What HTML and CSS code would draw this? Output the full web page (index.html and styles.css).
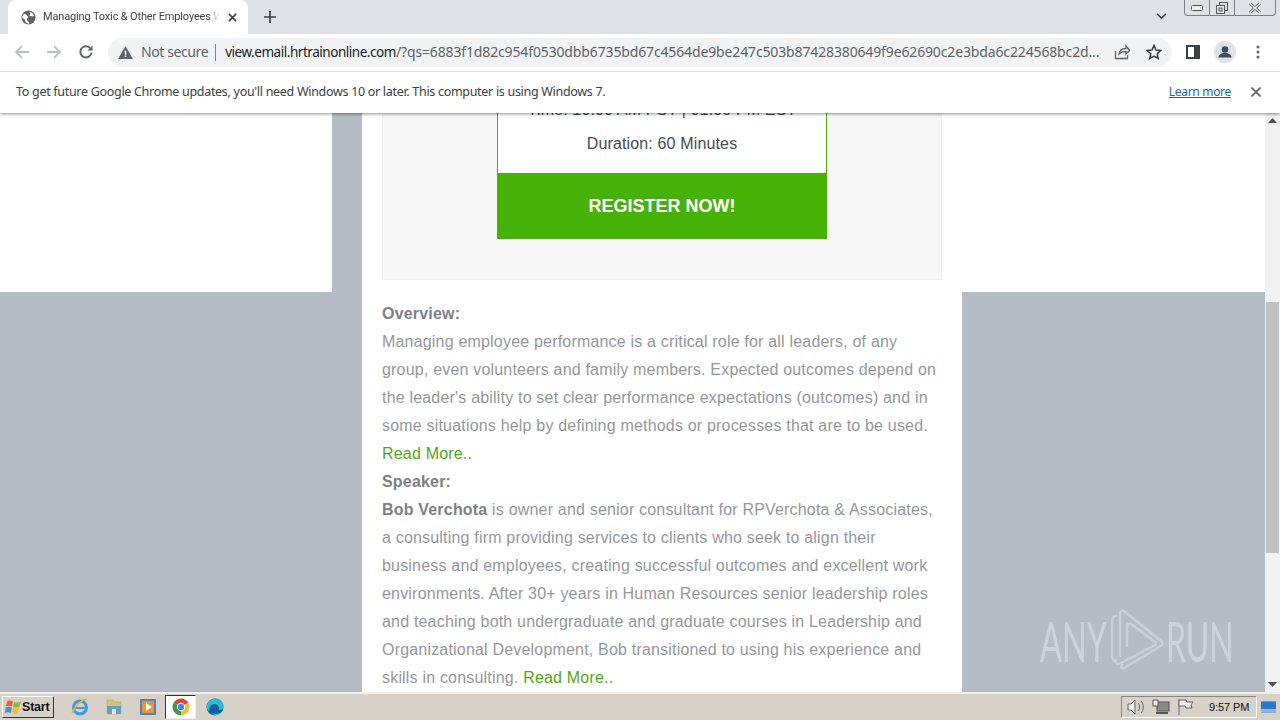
FILE: index.html
```html
<!DOCTYPE html>
<html lang="en">
<head>
<meta charset="utf-8">
<title>Managing Toxic &amp; Other Employees</title>
<link rel="stylesheet" href="styles.css">
</head>
<body>
<header class="chrome">
  <div class="tabstrip">
    <div class="tab">
      <svg class="globe" viewBox="0 0 16 16"><circle cx="8" cy="8" r="7.5" fill="#5f6368"/><path d="M3 4l3 1 2 3-2 1 1 3 2 1-1 2-3-2-1-3-3-2zM9 2l3 1 2 3-2 1-3-1 1-2z" fill="#fff"/></svg>
      <span class="tab-title">Managing Toxic &amp; Other Employees W</span>
      <svg class="tab-x" viewBox="0 0 10 10"><path d="M1 1l8 8M9 1l-8 8" stroke="#3c4043" stroke-width="1.7"/></svg>
    </div>
    <svg class="newtab" viewBox="0 0 12 12"><path d="M6 0v12M0 6h12" stroke="#3c4043" stroke-width="1.7"/></svg>
    <div class="strip-space"></div>
    <svg class="chev" viewBox="0 0 12 8"><path d="M1 1l5 5 5-5" fill="none" stroke="#3c4043" stroke-width="1.8"/></svg>
    <div class="winctl">
      <div class="wc wc-min"><svg viewBox="0 0 12 6" width="12" height="6"><rect x=".5" y=".5" width="11" height="5" rx="1" fill="#eef0f3" stroke="#555"/></svg></div>
      <div class="wc wc-max"><svg viewBox="0 0 12 12" width="12" height="12"><rect x="3.5" y=".5" width="8" height="8" fill="none" stroke="#555"/><rect x=".5" y="3.500" width="8" height="8" fill="#e6e8ec" stroke="#555"/><rect x="3" y="6" width="3" height="3" fill="none" stroke="#555"/></svg></div>
      <div class="wc wc-close"><svg viewBox="0 0 14 12" width="14" height="12"><path d="M2 1.500l10 9M12 1.500l-10 9" stroke="#555" stroke-width="3"/><path d="M2 1.500l10 9M12 1.500l-10 9" stroke="#f2f3f5" stroke-width="1.500" fill="none"/></svg></div>
    </div>
  </div>
  <div class="toolbar">
    <svg class="nav nav-first" viewBox="0 0 16 16"><path d="M15 8H2M8 2L2 8l6 6" fill="none" stroke="#bdc1c6" stroke-width="1.8"/></svg>
    <svg class="nav" viewBox="0 0 16 16"><path d="M1 8h13M8 2l6 6-6 6" fill="none" stroke="#bdc1c6" stroke-width="1.8"/></svg>
    <svg class="nav" viewBox="0 0 16 16"><path d="M13.500 8.500A5.600 5.600 0 1 1 12 4" fill="none" stroke="#5f6368" stroke-width="1.9"/><path d="M14.500 1.500v5h-5z" fill="#5f6368"/></svg>
    <div class="omnibox">
      <svg class="warn" viewBox="0 0 16 14"><path d="M8 0l8 14H0z" fill="#5f6368"/><path d="M7.200 5h1.600v4.500H7.200zM7.200 10.300h1.600v1.600H7.200z" fill="#fff"/></svg>
      <span class="insecure">Not secure</span>
      <span class="sep"></span>
      <span class="url"><span class="host">view.email.hrtrainonline.com</span><span class="path">/?qs=6883f1d82c954f0530dbb6735bd67c4564de9be247c503b87428380649f9e62690c2e3bda6c224568bc2d...</span></span>
      <svg class="omni-ico" viewBox="0 0 16 16"><path d="M1.500 7v7.500h12V11M5 10c.5-3.500 3.500-5.500 7-5.500V2l3.500 4.500L12 10V7.500C9 7.500 7 8 5 10z" fill="none" stroke="#5f6368" stroke-width="1.300"/></svg>
      <svg class="omni-ico omni-star" viewBox="0 0 16 16"><path d="M8 1.500l2 4.500 4.800.5-3.600 3.200 1 4.800L8 12.100l-4.200 2.400 1-4.800L1.200 6.500 6 6z" fill="none" stroke="#3c4043" stroke-width="1.600"/></svg>
    </div>
    <svg class="side-ico" viewBox="0 0 14 14"><path d="M0 0h14v14H0z" fill="#3c4043"/><path d="M2 2h6v10H2z" fill="#fff"/></svg>
    <svg class="avatar" viewBox="0 0 22 22"><circle cx="11" cy="11" r="11" fill="#dfe1e6"/><circle cx="11" cy="8.500" r="3.300" fill="#3d4a63"/><path d="M4.500 16.500c0-3 3-4.500 6.500-4.500s6.500 1.500 6.500 4.500z" fill="#3d4a63"/></svg>
    <svg class="menu-ico" viewBox="0 0 4 14"><circle cx="2" cy="2" r="1.500" fill="#5f6368"/><circle cx="2" cy="7" r="1.500" fill="#5f6368"/><circle cx="2" cy="12" r="1.500" fill="#5f6368"/></svg>
  </div>
  <div class="infobar">
    <span class="info-text">To get future Google Chrome updates, you'll need Windows 10 or later. This computer is using Windows 7.</span>
    <a class="learn" href="#">Learn more</a>
    <svg class="info-x" viewBox="0 0 10 10"><path d="M.5.500l9 9M9.500.500l-9 9" stroke="#5f6368" stroke-width="1.700"/></svg>
  </div>
</header>

<main class="viewport">
  <div class="page">
    <div class="side side-left"></div>
    <article class="column">
      <section class="promo">
        <div class="card">
          <div class="card-body">
            <p class="card-line card-time">Time: 10:00 AM PST | 01:00 PM EST</p>
            <p class="card-line">Duration: 60 Minutes</p>
          </div>
          <a class="register" href="#">REGISTER NOW!</a>
        </div>
      </section>
      <div class="copy">
        <p class="copy-line"><b>Overview:</b></p>
        <p class="copy-line">Managing employee performance is a critical role for all leaders, of any<br>group, even volunteers and family members. Expected outcomes depend on<br>the leader's ability to set clear performance expectations (outcomes) and in<br>some situations help by defining methods or processes that are to be used.<br><a class="more" href="#">Read More..</a></p>
        <p class="copy-line"><b>Speaker:</b></p>
        <p class="copy-line"><b>Bob Verchota</b> is owner and senior consultant for RPVerchota &amp; Associates,<br>a consulting firm providing services to clients who seek to align their<br>business and employees, creating successful outcomes and excellent work<br>environments. After 30+ years in Human Resources senior leadership roles<br>and teaching both undergraduate and graduate courses in Leadership and<br>Organizational Development, Bob transitioned to using his experience and<br>skills in consulting. <a class="more" href="#">Read More..</a></p>
      </div>
    </article>
    <div class="side side-right"></div>
  </div>
  <div class="scrollbar">
    <svg class="sb-arrow" viewBox="0 0 9 5"><path d="M4.500 0L9 5H0z" fill="#505050"/></svg>
    <div class="sb-track"><div class="sb-thumb"></div></div>
    <svg class="sb-arrow" viewBox="0 0 9 5"><path d="M0 0h9L4.500 5z" fill="#505050"/></svg>
  </div>
  <div class="watermark">
    <span class="wm-text wm-any">ANY</span>
    <svg class="wm-logo" viewBox="0 0 65 70"><g fill="none" stroke="#d9dde2" stroke-width="2.400" stroke-linejoin="round" stroke-linecap="round"><path d="M11 10C8 10 7 12 7 15V50C7 53 9 55 11 55"/><path d="M15 50V8C15 5 17 4 19 5L56 35C58 37 58 39 56 40L19 62C17 63 15 61 17 59"/><path d="M22 40V20C22 18 24 17 26 18L50 36C51 37 51 38 50 39L14 58C12 59 10 56 11 54"/></g></svg>
    <span class="wm-text wm-run">RUN</span>
  </div>
</main>

<footer class="taskbar">
  <button class="start"><svg class="start-logo" viewBox="0 0 18 16"><path d="M3 2.500C5 1 7 1.500 9 2.500L8 7.500C6 6.500 4 6.500 2 7.500z" fill="#e8642c"/><path d="M10 3C12 4 14 4 17 2L15.500 7.500C13.500 8.800 11 8.500 9 8z" fill="#8ab93f"/><path d="M1.800 8.500C4 7.500 6 7.500 7.800 8.500L7 14C5 13 3 13 .8 14z" fill="#4a8fd8"/><path d="M8.800 9C11 9.700 13 9.700 15.300 8.500L14 14C12 15 10 15 8 14.500z" fill="#f3c135"/></svg><span>Start</span></button>
  <div class="quick">
    <svg class="ql" viewBox="0 0 18 18"><circle cx="9" cy="9.500" r="6.500" fill="none" stroke="#3f9ae0" stroke-width="3"/><path d="M3 10h12" stroke="#3f9ae0" stroke-width="2"/><path d="M1 15C4 8 10 2 16 1" fill="none" stroke="#e8b93a" stroke-width="1.500"/></svg>
    <svg class="ql" viewBox="0 0 18 18"><path d="M2 2h6l2 2h6v12H2z" fill="#dcc06c" stroke="#b9a25a" stroke-width=".6"/><path d="M2 8h14v8H2z" fill="#5fa4c7"/><path d="M7 11h4v5H7z" fill="#dfeaf0"/></svg>
    <svg class="ql" viewBox="0 0 18 18"><rect x="1" y="1" width="16" height="16" fill="#4d86b8"/><rect x="3" y="3" width="12" height="12" fill="#ec9631"/><path d="M7 5l6 4-6 4z" fill="#fff"/></svg>
    <div class="ql-active"><svg class="ql" viewBox="0 0 18 18"><path d="M9 9L1.640 4.750A8.500 8.500 0 0 1 16.360 4.750z" fill="#d9453a"/><path d="M9 9L16.360 4.750A8.500 8.500 0 0 1 9 17.500z" fill="#f3c02f"/><path d="M9 9V17.500A8.500 8.500 0 0 1 1.640 4.750z" fill="#3b9a4a"/><circle cx="9" cy="9" r="4.200" fill="#fff"/><circle cx="9" cy="9" r="3.200" fill="#4386e8"/></svg></div>
    <svg class="ql" viewBox="0 0 18 18"><circle cx="9" cy="9" r="8.500" fill="#0f5ea8"/><path d="M.5 10C.5 4 5 .5 9.500 .5C14.500 .5 17.500 4.500 17.500 8.500C17.500 11 15 12 12.500 12C14 9.500 12 6 8.500 6C4.500 6 3 10 3.500 13C2 12.500 1 11.500 .5 10z" fill="#2fbcc4"/><path d="M5 14C7 16.500 12 16.500 15.500 14C13 17.500 8 18.500 5 14z" fill="#52d6a8"/></svg>
  </div>
  <div class="task-space"></div>
  <div class="tray">
    <svg class="tr-ico" viewBox="0 0 18 16"><path d="M1 5h3l4-4v14l-4-4H1z" fill="#eee" stroke="#666"/><path d="M11 4c2 2 2 6 0 8M14 2c3 3 3 9 0 12" fill="none" stroke="#666"/></svg>
    <svg class="tr-ico" viewBox="0 0 18 16"><rect x="5" y="3" width="12" height="9" fill="#8a8a8a" stroke="#555"/><path d="M1 1h5v6H1z" fill="#eee" stroke="#555"/><path d="M4 14h12" stroke="#555" stroke-width="2"/></svg>
    <svg class="tr-ico" viewBox="0 0 18 16"><path d="M2 0v16" stroke="#666"/><path d="M2 1h7l1 2h6l-2 3 1 3H9L8 7H2z" fill="#eee" stroke="#666"/></svg>
    <span class="clock">9:57 PM</span>
  </div>
  <svg class="show-desktop" viewBox="0 0 16 12"><rect width="16" height="12" fill="#2a78c8"/><path d="M0 8h16v4H0z" fill="#8fb7dd"/></svg>
</footer>
</body>
</html>
```
FILE: styles.css
```css
* { box-sizing: border-box; }
html, body { margin: 0; height: 100%; overflow: hidden; }
body { display: flex; flex-direction: column; width: 1280px; height: 720px; font-family: "Liberation Sans", Arial, sans-serif; background: #fff; }
svg { display: block; flex: none; }
a { text-decoration: none; }

.chrome { flex: none; position: relative; z-index: 2; box-shadow: 0 1px 3px rgba(0,0,0,.45); }
.tabstrip { height: 34px; background: #dee1e6; display: flex; align-items: flex-start; }
.tab { width: 240px; height: 34px; margin: 0 0 0 8px; background: #fff; border-radius: 8px 8px 0 0; display: flex; align-items: center; padding: 0 0 0 13px; }
.globe { width: 15px; height: 15px; }
.tab-title { width: 176px; margin-left: 7px; font: 11px/16px Roboto, sans-serif; letter-spacing: -.15px; color: #3c4043; white-space: nowrap; overflow: hidden; -webkit-mask-image: linear-gradient(90deg, #000 94%, transparent); mask-image: linear-gradient(90deg, #000 94%, transparent); }
.tab-x { width: 9px; height: 9px; margin-left: 9px; }
.newtab { width: 12px; height: 12px; margin: 11px 0 0 16px; }
.strip-space { flex: 1; }
.chev { width: 11px; height: 7px; margin: 13px 17px 0 0; }
.winctl { width: 92px; height: 16px; margin-right: 4px; display: flex; border: 1px solid #7a7f87; border-top: 0; border-radius: 0 0 4px 4px; }
.wc { display: flex; align-items: center; justify-content: center; height: 100%; }
.wc-min { width: 25px; border-right: 1px solid #7a7f87; }
.wc-max { width: 25px; border-right: 1px solid #7a7f87; }
.wc-close { flex: 1; }

.toolbar { height: 38px; background: #fff; border-bottom: 1px solid #dadce0; display: flex; align-items: center; padding-bottom: 1px; }
.nav { width: 16px; height: 16px; margin-left: 16px; }
.nav-first { margin-left: 14px; }
.omnibox { width: 1064px; height: 29px; margin-left: 14px; background: #f1f3f4; border-radius: 15px; display: flex; align-items: center; padding-left: 10px; }
.warn { width: 15px; height: 13px; }
.insecure { margin-left: 8px; font: 14px/18px "Noto Sans", sans-serif; letter-spacing: -.4px; color: #5f6368; white-space: nowrap; }
.sep { width: 1px; height: 17px; margin: 0 9px 0 7px; background: #80868b; }
.url { width: 876px; font: 14px/18px "Noto Sans", sans-serif; white-space: nowrap; overflow: hidden; }
.host { color: #202124; font-size: 13.5px; letter-spacing: -.46px; }
.path { color: #5f6368; letter-spacing: -.14px; }
.omni-ico { width: 16px; height: 16px; margin-left: 13px; }
.omni-star { margin-left: 16px; }
.side-ico { width: 14px; height: 14px; margin-left: 14px; }
.avatar { width: 22px; height: 22px; margin-left: 14px; }
.menu-ico { width: 4px; height: 14px; margin-left: 20px; }

.infobar { height: 41px; background: #fff; display: flex; align-items: center; padding: 0 19px 2px 16px; }
.info-text { flex: 1; font: 12.5px/16px "Noto Sans", sans-serif; letter-spacing: -.3px; color: #3c4043; white-space: nowrap; }
.learn { font: 12px/16px "Noto Sans", sans-serif; letter-spacing: -.3px; color: #1a5fc0; text-decoration: underline; }
.info-x { width: 10px; height: 10px; margin-left: 20px; }

.viewport { flex: 1; min-height: 0; display: flex; position: relative; overflow: hidden; background: #b6bcc6; }
.page { flex: 1; min-width: 0; display: flex; align-items: flex-start; }
.side { height: 179px; background: #fff; }
.side-left { width: 332px; margin-right: 30px; }
.side-right { flex: 1; }
.column { width: 600px; height: 579px; background: #fff; padding: 0 20px; overflow: hidden; }
.promo { height: 167px; background: #f6f6f6; border: 1px solid #f1f1f1; border-top: 0; padding: 0 114px; }
.card { width: 330px; }
.card-body { height: 60px; border: 1px solid #46b207; border-width: 0 1px; background: #fff; overflow: hidden; }
.card-line { margin: 0; height: 34px; font-size: 16px; line-height: 34px; letter-spacing: .15px; text-align: center; color: #444a55; white-space: nowrap; }
.card-time { margin-top: -20px; }
.register { display: block; height: 66px; background: #46b207; color: #fff; font-size: 18px; font-weight: 700; line-height: 66px; text-align: center; }
.copy { padding-top: 20px; font-size: 16px; line-height: 28px; letter-spacing: .19px; color: #94979e; white-space: nowrap; }
.copy-line { margin: 0; }
.copy b { color: #7d8089; }
.more { color: #4fa816; }

.scrollbar { width: 15px; flex: none; background: #f1f1f1; display: flex; flex-direction: column; align-items: center; }
.sb-arrow { width: 9px; height: 5px; margin: 5px 0; }
.sb-track { flex: 1; width: 100%; padding-top: 174px; }
.sb-thumb { height: 251px; margin: 0 1px; background: #c1c1c1; }

.watermark { position: absolute; left: 1040px; top: 493px; height: 70px; display: flex; align-items: center; pointer-events: none; }
.wm-text { font: 400 56px/70px Lato, sans-serif; color: rgba(226,230,235,.55); display: block; transform-origin: 0 50%; white-space: nowrap; }
.wm-any { width: 60px; margin-right: 5px; transform: scaleX(.58); }
.wm-run { width: 63px; margin-left: -4px; transform: scaleX(.57); }
.wm-logo { width: 65px; height: 70px; opacity: .6; }

.taskbar { flex: none; height: 28px; background: #d6d2ca; border-top: 2px solid #f2f0eb; display: flex; align-items: center; }
.start { width: 52px; height: 22px; margin-left: 2px; padding: 0 0 0 1px; border: 1px solid; border-color: #fff #333 #333 #fff; background: #d6d2ca; display: flex; align-items: center; gap: 0; font: 700 12.5px/20px "Liberation Sans", sans-serif; letter-spacing: -.2px; color: #111; }
.start-logo { width: 18px; height: 16px; }
.quick { display: flex; align-items: center; margin-left: 17px; }
.ql { width: 18px; height: 18px; margin-right: 16px; }
.ql-active { width: 31px; height: 24px; margin: 0 10px 0 -8px; background: #fff; border: 1px solid; border-color: #333 #eee #eee #333; display: flex; align-items: center; justify-content: center; }
.ql-active .ql { margin: 0; }
.task-space { flex: 1; }
.tray { width: 136px; height: 22px; margin-right: 0; border: 1px solid; border-color: #8a8780 #fff #fff #8a8780; display: flex; align-items: center; padding-left: 5px; gap: 7px; }
.tr-ico { width: 18px; height: 16px; }
.clock { margin-left: 7px; font: 11px/14px "Liberation Sans", sans-serif; letter-spacing: -.1px; color: #111; }
.show-desktop { width: 15px; height: 12px; margin-right: 4px; margin-left: 4px; }
```
